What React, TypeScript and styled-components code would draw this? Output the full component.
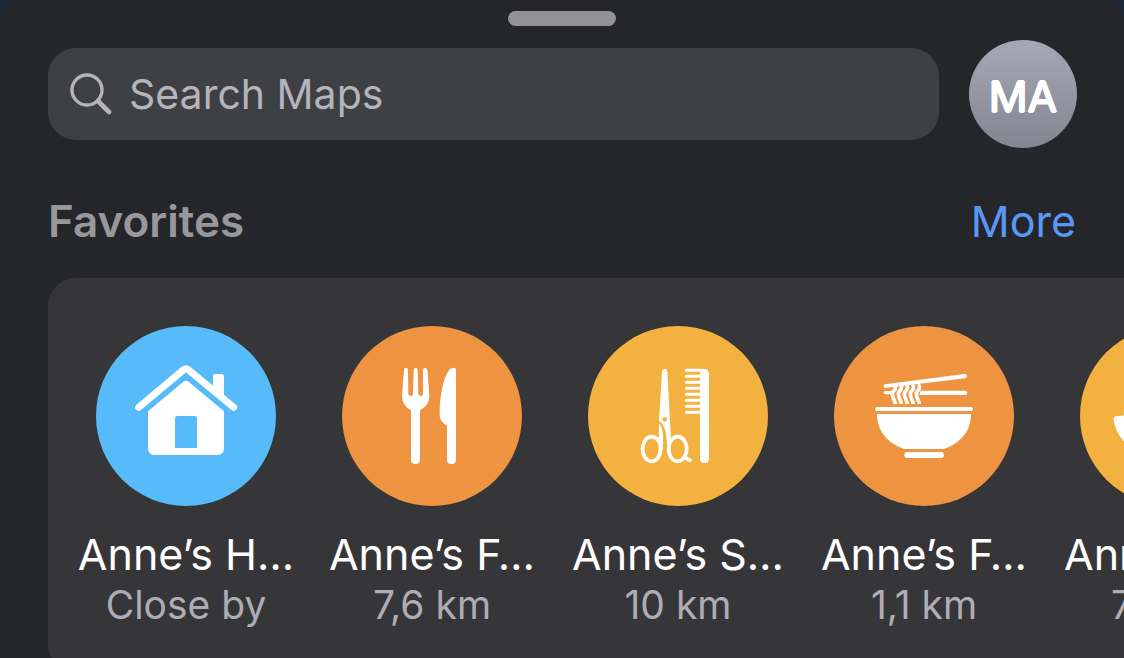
import React from "react";
import styled, { createGlobalStyle } from "styled-components";

const GlobalStyle = createGlobalStyle`
  *, *::before, *::after { box-sizing: border-box; }
  body {
    margin: 0;
    background: #1c2639;
    font-family: Inter, "Liberation Sans", sans-serif;
    -webkit-font-smoothing: antialiased;
  }
  button, input { font: inherit; }
`;

const Sheet = styled.main`
  display: flex;
  flex-direction: column;
  height: 100vh;
  overflow: hidden;
  background: #252629;
  border-radius: 20px 20px 0 0;
`;

const Grabber = styled.div`
  flex: none;
  align-self: center;
  width: 108px;
  height: 15px;
  margin-top: 11px;
  border-radius: 8px;
  background: #929297;
`;

const TopBar = styled.header`
  flex: none;
  display: flex;
  align-items: center;
  gap: 30px;
  margin-top: 14px;
  padding: 0 47px 0 48px;
`;

const SearchField = styled.label`
  flex: 1;
  display: flex;
  align-items: center;
  gap: 17px;
  height: 92px;
  padding: 0 22px;
  border-radius: 28px;
  background: #3f4045;
  color: #b5b4bc;
`;

const SearchGlyph = styled.svg`
  flex: none;
  width: 42px;
  height: 42px;
`;

const SearchInput = styled.input`
  flex: 1;
  min-width: 0;
  padding: 0;
  border: 0;
  outline: 0;
  background: none;
  color: #ffffff;
  font-size: 41px;
  line-height: 52px;
  &::placeholder { color: #b5b4bc; opacity: 1; }
`;

const Avatar = styled.button`
  flex: none;
  width: 108px;
  height: 108px;
  padding: 4px 0 0;
  border: 0;
  border-radius: 50%;
  background: linear-gradient(#a6a9b5, #838590);
  color: #ffffff;
  font-size: 43px;
  font-weight: 400;
  line-height: 52px;
  text-shadow: 1px 0 #ffffff, -1px 0 #ffffff, 0 1px #ffffff, 0 -1px #ffffff;
`;

const SectionHead = styled.div`
  flex: none;
  display: flex;
  align-items: center;
  justify-content: space-between;
  margin-top: 47px;
  padding: 0 48px;
`;

const Heading = styled.h2`
  margin: 0;
  color: #98989c;
  font-size: 44px;
  font-weight: 600;
  line-height: 52px;
`;

const MoreLink = styled.a`
  color: #5a98f8;
  font-size: 43px;
  line-height: 52px;
  text-decoration: none;
`;

const Card = styled.ul`
  flex: none;
  display: flex;
  margin: 31px 0 0 48px;
  padding: 48px 0 42px 15px;
  list-style: none;
  overflow: hidden;
  border-radius: 28px 0 0 28px;
  background: #363638;
`;

const Item = styled.li`
  flex: none;
  width: 246px;
`;

const Place = styled.button`
  display: flex;
  flex-direction: column;
  align-items: center;
  width: 100%;
  padding: 0;
  border: 0;
  background: none;
  white-space: nowrap;
`;

const Disc = styled.span<{ $color: string }>`
  display: block;
  width: 180px;
  height: 180px;
  border-radius: 50%;
  background: ${(p) => p.$color};
  color: ${(p) => p.$color};
  svg { display: block; width: 100%; height: 100%; }
`;

const Name = styled.span`
  margin-top: 22px;
  color: #ffffff;
  font-size: 43px;
  line-height: 52px;
`;

const Distance = styled.span`
  color: #aeadb5;
  font-size: 39px;
  line-height: 50px;
`;

const HomeIcon = () => (
  <svg viewBox="18 18 540 540" fill="#fff" aria-hidden="true">
    <path d="M146 262 L280 150 Q288 143 296 150 L431 262" fill="none" stroke="#fff" strokeWidth="21" strokeLinecap="round" strokeLinejoin="round" />
    <path d="M369 205 V169 Q369 162 376 162 H395 Q402 162 402 169 V236 Z" />
    <path d="M174 274 L282 184 Q288 180 294 184 L402 274 V383 Q402 405 380 405 H196 Q174 405 174 383 Z" />
    <path d="M255 384 V295 Q255 288 262 288 H314 Q321 288 321 295 V384 Z" fill="currentColor" />
  </svg>
);

const DiningIcon = () => (
  <svg viewBox="18 18 540 540" fill="#fff" aria-hidden="true">
    <path d="M204 150 Q204 144 210 144 Q216 144 216 150 L217 222 Q218 228 224 228 Q230 228 231 222 L233 150 Q233 144 239 144 Q245 144 245 150 L247 222 Q248 228 254 228 Q260 228 261 222 L261 150 Q261 144 267 144 Q273 144 274 150 L280 226 Q281 256 253 270 L252 271 V419 Q252 432 239 432 Q225 432 225 419 V271 Q197 257 198 226 Z" />
    <path d="M360 150 Q360 143 351 143 C332 143 311 205 311 284 C311 301 321 309 333 316 V419 Q333 432 346 432 Q360 432 360 419 Z" />
  </svg>
);

const SalonIcon = () => (
  <svg viewBox="18 18 540 540" fill="#fff" aria-hidden="true">
    <path d="M240 154 Q241 146 248 146 Q255 146 256 154 L266 340 V392 L255 390 C256 346 250 315 231 302 Z" />
    <path d="M231 311 C241 319 246 338 242 390 L230 392 Z" />
    <g fill="none" stroke="#fff" strokeWidth="11">
      <ellipse cx="209" cy="387" rx="27" ry="37" />
      <ellipse cx="287" cy="387" rx="27" ry="37" />
      <path d="M303 416 Q310 408 314 415 Q318 421 324 420" strokeLinecap="round" />
    </g>
    <circle cx="248" cy="298" r="7" fill="currentColor" />
    <path d="M354 147 H366 Q381 147 381 162 V416 Q381 429 368 429 Q354 429 354 416 Z" />
    <path d="M356 151 H313 M356 169 H313 M356 187 H313 M356 205 H313 M356 223 H313 M356 241 H313 M356 259 H313 M356 277 H313" stroke="#fff" strokeWidth="9" strokeLinecap="round" />
  </svg>
);

const NOODLES = [0, 18, 36, 54, 72];

const NoodlesIcon = () => (
  <svg viewBox="18 18 540 540" fill="#fff" aria-hidden="true">
    <path d="M171 193 L409 162 Q416 161 417 168 Q418 174 411 175 L172 204 Q167 204 167 199 Q167 194 171 193 Z" />
    <path d="M172 213 H191 Q188 218 191 223 H172 Q167 222 167 218 Q167 214 172 213 Z" />
    <path d="M278 212 H411 Q418 212 418 218 Q418 225 411 225 H274 Q276 218 278 212 Z" />
    <g fill="none" stroke="#fff" strokeWidth="11">
      {NOODLES.map((x) => (
        <path key={x} d={`M${199 + x} 193 C${211 + x} 207 ${193 + x} 211 ${193 + x} 221 C${193 + x} 235 ${201 + x} 240 ${202 + x} 252`} />
      ))}
    </g>
    <rect x="141" y="261" width="294" height="12" rx="6" />
    <path d="M147 282 H429 C429 335 396 370 348 387 H228 C180 370 147 335 147 282 Z" />
    <rect x="229" y="396" width="119" height="18" rx="9" />
  </svg>
);

const BowlIcon = () => (
  <svg viewBox="18 18 540 540" fill="#fff" aria-hidden="true">
    <path d="M119 296 Q119 290 125 289 Q288 272 451 289 Q457 290 457 296 C452 350 410 392 350 405 H226 C166 392 124 350 119 296 Z" />
  </svg>
);

const BLUE = "#57bbfa";
const ORANGE = "#ee9440";
const YELLOW = "#f3b240";

const places = [
  { name: "Anne’s H…", distance: "Close by", color: BLUE, Icon: HomeIcon },
  { name: "Anne’s F…", distance: "7,6 km", color: ORANGE, Icon: DiningIcon },
  { name: "Anne’s S…", distance: "10 km", color: YELLOW, Icon: SalonIcon },
  { name: "Anne’s F…", distance: "1,1 km", color: ORANGE, Icon: NoodlesIcon },
  { name: "Anne’s S…", distance: "7,3 km", color: YELLOW, Icon: BowlIcon },
];

export default function App() {
  return (
    <>
      <GlobalStyle />
      <Sheet>
        <Grabber />
        <TopBar>
          <SearchField>
            <SearchGlyph viewBox="0 0 42 42" fill="none" stroke="currentColor" strokeLinecap="round" aria-hidden="true">
              <circle cx="17" cy="17" r="15" strokeWidth="3.4" />
              <path d="M28 28 L39 39" strokeWidth="4.6" />
            </SearchGlyph>
            <SearchInput type="search" placeholder="Search Maps" aria-label="Search Maps" />
          </SearchField>
          <Avatar type="button">MA</Avatar>
        </TopBar>
        <SectionHead>
          <Heading>Favorites</Heading>
          <MoreLink href="#more">More</MoreLink>
        </SectionHead>
        <Card>
          {places.map(({ name, distance, color, Icon }, i) => (
            <Item key={i}>
              <Place type="button">
                <Disc $color={color}>
                  <Icon />
                </Disc>
                <Name>{name}</Name>
                <Distance>{distance}</Distance>
              </Place>
            </Item>
          ))}
        </Card>
      </Sheet>
    </>
  );
}
